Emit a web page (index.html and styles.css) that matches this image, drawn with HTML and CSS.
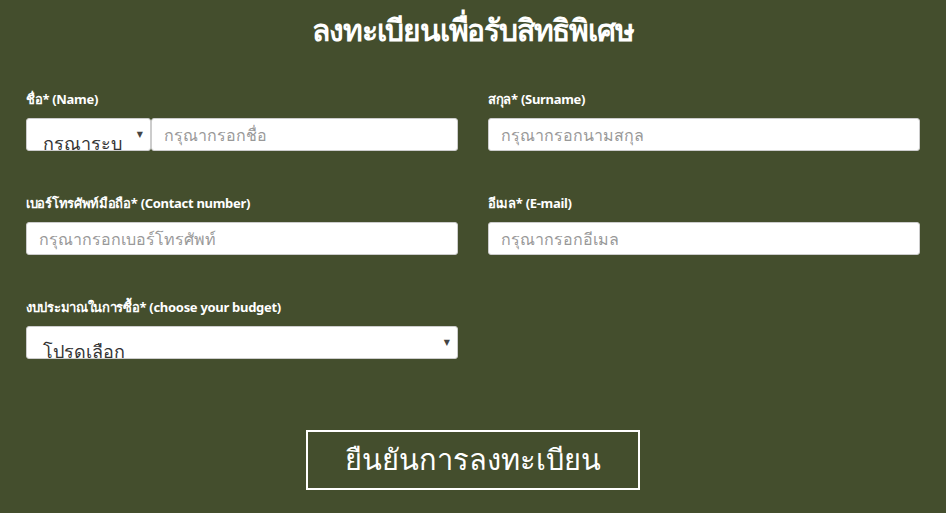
FILE: index.html
```html
<!DOCTYPE html>
<html lang="th">
<head>
<meta charset="utf-8">
<link rel="stylesheet" href="styles.css">
</head>
<body>
<div class="page">
  <h1 class="title">ลงทะเบียนเพื่อรับสิทธิพิเศษ</h1>
  <form class="form">
    <div class="grid">
      <div class="field">
        <label class="label">ชื่อ* (Name)</label>
        <div class="combo">
          <div class="select prefix"><span class="select-text">กรุณาระบุ</span><span class="arrow">▼</span></div>
          <input class="input grow" type="text" placeholder="กรุณากรอกชื่อ">
        </div>
      </div>
      <div class="field">
        <label class="label">สกุล* (Surname)</label>
        <input class="input" type="text" placeholder="กรุณากรอกนามสกุล">
      </div>
      <div class="field">
        <label class="label">เบอร์โทรศัพท์มือถือ* (Contact number)</label>
        <input class="input" type="text" placeholder="กรุณากรอกเบอร์โทรศัพท์">
      </div>
      <div class="field">
        <label class="label">อีเมล* (E-mail)</label>
        <input class="input" type="text" placeholder="กรุณากรอกอีเมล">
      </div>
      <div class="field">
        <label class="label">งบประมาณในการซื้อ* (choose your budget)</label>
        <div class="select full"><span class="select-text">โปรดเลือก</span><span class="arrow">▼</span></div>
      </div>
    </div>
    <div class="actions">
      <button class="submit" type="button">ยืนยันการลงทะเบียน</button>
    </div>
  </form>
</div>
</body>
</html>
```

FILE: styles.css
```css
html, body {
  margin: 0;
  padding: 0;
  background: #444e2d;
  height: 100%;
  overflow: hidden;
}
.page {
  font-family: "Noto Sans", "DejaVu Sans", sans-serif;
  color: #fff;
  padding: 0 26px;
}
.title {
  margin: 0;
  padding-top: 10px;
  height: 60px;
  box-sizing: border-box;
  text-align: center;
  font-size: 30px;
  font-weight: bold;
  line-height: 40px;
  letter-spacing: -1.2px;
}
.grid {
  display: grid;
  grid-template-columns: 432px 432px;
  column-gap: 30px;
  row-gap: 43px;
  padding-top: 30px;
}
.field {
  display: flex;
  flex-direction: column;
}
.label {
  font-size: 13px;
  font-weight: bold;
  line-height: 18px;
  height: 28px;
  letter-spacing: -0.3px;
}
.combo {
  display: flex;
}
.input {
  height: 33px;
  box-sizing: border-box;
  border: 1px solid #ccc;
  border-radius: 3px;
  background: #fff;
  padding: 0 12px;
  font-family: inherit;
  font-size: 16px;
  color: #555;
  outline: none;
  width: 100%;
}
.input::placeholder {
  color: #999;
}
.grow {
  flex: 1;
  width: auto;
  min-width: 0;
}
.select {
  position: relative;
  height: 33px;
  box-sizing: border-box;
  background: #fff;
  border: 1px solid #ccc;
  border-radius: 3px;
  overflow: hidden;
  color: #333;
  font-size: 18px;
}
.prefix {
  width: 125px;
  flex: none;
}
.full {
  width: 100%;
}
.select-text {
  display: block;
  padding: 12px 0 0 16px;
  line-height: 24px;
}
.arrow {
  position: absolute;
  right: 7px;
  top: 9px;
  font-size: 8px;
  color: #444;
}
.actions {
  display: flex;
  justify-content: center;
  padding-top: 71px;
}
.submit {
  width: 334px;
  height: 60px;
  background: transparent;
  border: 2px solid #fff;
  color: #fff;
  font-family: inherit;
  font-size: 29px;
  padding: 0;
  cursor: pointer;
}
```
